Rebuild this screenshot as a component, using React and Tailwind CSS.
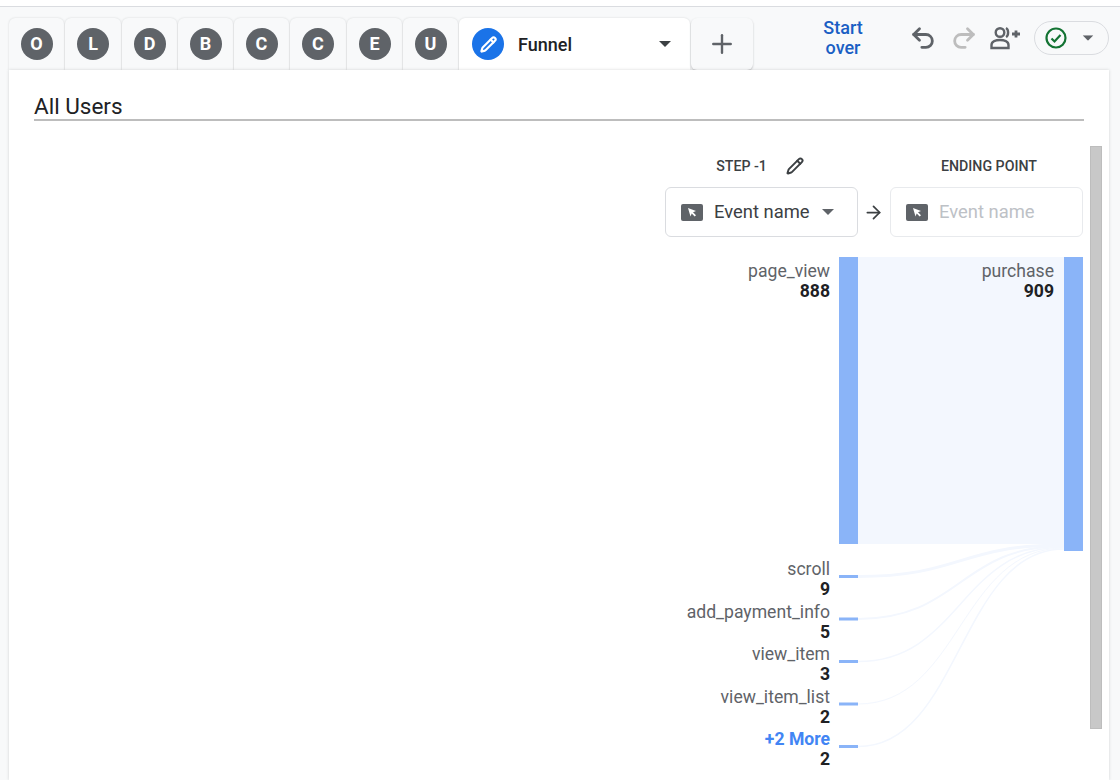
import React from 'react';
import { Plus, Undo2, Redo2, Pencil, ArrowRight } from 'lucide-react';

const letters = ['O', 'L', 'D', 'B', 'C', 'C', 'E', 'U'];
const widths = ['w-[55px]', 'w-[56px]', 'w-[55px]', 'w-[55px]', 'w-[55px]', 'w-[56px]', 'w-[55px]', 'w-[55px]'];

const rows = [
  { label: 'scroll', value: 9 },
  { label: 'add_payment_info', value: 5 },
  { label: 'view_item', value: 3 },
  { label: 'view_item_list', value: 2 },
  { label: '+2 More', value: 2, more: true },
];

function Caret({ className }) {
  return (
    <svg width="12" height="6" viewBox="0 0 12 6" className={className}>
      <path d="M0 0h12L6 6z" fill="currentColor" />
    </svg>
  );
}

function CursorChip() {
  return (
    <svg width="22" height="17" viewBox="0 0 22 17" className="shrink-0">
      <rect width="22" height="17" rx="2" fill="#5f6368" />
      <path d="M7 4l8 3-3 1.200 3 3-1.300 1.300-3-3L9.500 12.500z" fill="#fff" />
    </svg>
  );
}

function Sankey() {
  const links = [
    { y: 576.5, end: 545, w: 3 },
    { y: 619, end: 546, w: 2 },
    { y: 661.5, end: 547, w: 1.500 },
    { y: 704, end: 548, w: 1 },
    { y: 746.5, end: 549, w: 1.500 },
  ];
  return (
    <svg width="244" height="503" viewBox="839 257 244 503" className="shrink-0">
      <rect x="858" y="257" width="206" height="287" fill="#f3f7fe" />
      {links.map((l) => (
        <path
          key={l.y}
          d={`M858 ${l.y}C960 ${l.y} 960 ${l.end} 1064 ${l.end}`}
          fill="none"
          stroke="#f3f7fe"
          strokeWidth={l.w}
        />
      ))}
      <rect x="839" y="257" width="19" height="287" fill="#8ab4f8" />
      <rect x="1064" y="257" width="19" height="294" fill="#8ab4f8" />
      {links.map((l) => (
        <rect key={l.y} x="839" y={l.y - 1.500} width="19" height="3" fill="#8ab4f8" />
      ))}
    </svg>
  );
}

function App() {
  return (
    <div className="w-[1120px] h-[780px] overflow-hidden bg-white font-['Roboto',sans-serif]">
      <div className="h-[7px] border-b border-[#dadce0]" />
      <div className="bg-[#f8f9fa] h-[773px] pl-[9px] pr-[11px] flex flex-col">
        <div className="h-[63px] flex items-end shrink-0">
          <div className="flex h-[52px] gap-px">
            {letters.map((l, i) => (
              <div key={i} className={`${widths[i]} rounded-t-md bg-[#f8f9fa] flex items-center justify-center shadow-[0_0_2px_rgba(60,64,67,0.2)]`}>
                <span className="w-8 h-8 rounded-full bg-[#5f6368] text-white text-lg font-bold flex items-center justify-center">{l}</span>
              </div>
            ))}
            <div className="w-[231px] rounded-t-md bg-white flex items-center pl-[13px] pr-[19px] shadow-[0_0_2px_rgba(60,64,67,0.2)]">
              <span className="w-8 h-8 rounded-full bg-[#1a73e8] flex items-center justify-center">
                <Pencil size={17} color="#fff" strokeWidth={3} />
              </span>
              <span className="ml-[14px] mt-[2px] text-lg font-medium text-[#202124]">Funnel</span>
              <Caret className="ml-auto text-[#3c4043]" />
            </div>
            <div className="w-[62px] rounded-md bg-[#f8f9fa] flex items-center justify-center text-[#5f6368] shadow-[0_1px_2px_rgba(60,64,67,0.3)]">
              <Plus size={30} strokeWidth={1.900} />
            </div>
          </div>
          <div className="flex-1 h-[52px] flex items-center">
            <div className="ml-[68px] w-[44px] mt-[-12px] text-center text-lg leading-5 font-medium text-[#1a5fc4]">Start over</div>
            <Undo2 size={28} color="#5f6368" strokeWidth={2.400} className="ml-[44px] mt-[-12px]" />
            <Redo2 size={28} color="#bdbdbd" strokeWidth={2.400} className="ml-[13px] mt-[-12px]" />
            <svg width="31" height="24" viewBox="0 0 31 24" fill="none" stroke="#5f6368" strokeWidth="2.400" className="ml-[12px] mt-[-12px]">
              <circle cx="10" cy="6.500" r="4.300" />
              <path d="M1.500 22v-3c0-3.500 4.500-5 8.500-5s8.500 1.500 8.500 5v3z" />
              <path d="M16 2c2.800 1.500 2.800 7.500 0 9" />
              <path d="M22 8h8M26 4.500v7" strokeWidth="2.800" />
            </svg>
            <div className="ml-[13px] mt-[-12px] w-[75px] h-[34px] rounded-full border border-[#dadce0] flex items-center pl-[10px] pr-[14px]">
              <svg width="22" height="22" viewBox="0 0 22 22" fill="none" stroke="#137333" strokeWidth="2.200">
                <circle cx="11" cy="11" r="9.500" />
                <path d="M6.500 11.500l3 3 6-6.500" stroke="#137333" />
              </svg>
              <Caret className="ml-auto text-[#5f6368] scale-90" />
            </div>
          </div>
        </div>

        <div className="relative flex-1 w-[1100px] bg-white shadow-[0_0_3px_rgba(60,64,67,0.2)] px-[25px] overflow-hidden">
          <div className="h-[26px] box-content border-b-2 border-[#bdbdbd] text-[22.500px] leading-[26px] pt-[23px] text-[#202124]">All Users</div>

          {/* scrollbar */}
          <div className="absolute left-[1081px] top-[76px] w-3 h-[583px] bg-[#c8c8c8] border border-[#bdbdbd]" />

          <div className="flex justify-end pr-px mt-[36px]">
            <div className="w-[418px]">
              <div className="flex text-[14.200px] font-medium text-[#3c4043] h-[20px] items-center">
                <div className="w-[193px] flex justify-center items-center pr-[3px]">
                  <span>STEP -1</span>
                  <Pencil size={18} strokeWidth={2.600} className="ml-[19px] mt-[-3px] text-[#3c4043]" />
                </div>
                <div className="w-[193px] ml-[32px] text-center pl-[5px]">ENDING POINT</div>
              </div>
              <div className="flex items-center mt-[10px]">
                <div className="w-[193px] h-[50px] rounded-md border border-[#dadce0] flex items-center pl-[15px] text-[18.400px] text-[#3c4043]">
                  <CursorChip />
                  <span className="ml-[11px] mt-[-1px]">Event name</span>
                  <Caret className="ml-[12px] text-[#5f6368]" />
                </div>
                <div className="w-8 flex justify-center">
                  <ArrowRight size={21} className="text-[#3c4043] ml-[-1px]" />
                </div>
                <div className="w-[193px] h-[50px] rounded-md border border-[#e8eaed] flex items-center pl-[15px] text-[18.400px] text-[#bdc1c6]">
                  <CursorChip />
                  <span className="ml-[11px] mt-[-1px]">Event name</span>
                </div>
              </div>
              <div className="relative flex mt-[20px]">
                <div className="w-[165px] mr-[9px] text-right text-[17.600px] leading-5">
                  <div className="pt-[4px] h-[302px]">
                    <div className="text-[#5f6368]">page_view</div>
                    <div className="font-bold text-[#202124]">888</div>
                  </div>
                  <div className="flex flex-col gap-[2.600px]">
                    {rows.map((r) => (
                      <div key={r.label}>
                        <div className={r.more ? 'font-bold text-[#4285f4]' : 'text-[#5f6368]'}>{r.label}</div>
                        <div className="font-bold text-[#202124]">{r.value}</div>
                      </div>
                    ))}
                  </div>
                </div>
                <Sankey />
                <div className="absolute right-[29px] top-[4px] text-right text-[17.600px] leading-5">
                  <div className="text-[#5f6368]">purchase</div>
                  <div className="font-bold text-[#202124]">909</div>
                </div>
              </div>
            </div>
          </div>
        </div>
      </div>
    </div>
  );
}

export default App;
